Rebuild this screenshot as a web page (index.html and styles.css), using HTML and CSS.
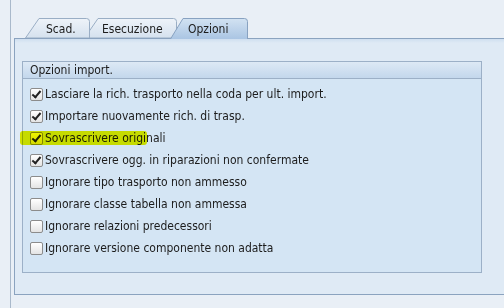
FILE: index.html
```html
<!DOCTYPE html>
<html>
<head>
<meta charset="utf-8">
<link rel="stylesheet" href="styles.css">
</head>
<body>
<div class="frame">
  <div class="tabstrip">
    <div class="tab tab1">
      <svg class="tabshape" width="65" height="20" viewBox="0 0 65 20"><defs><linearGradient id="g1" x1="0" y1="0" x2="0" y2="1"><stop offset="0" stop-color="#eef3f9"/><stop offset="1" stop-color="#d5e1ee"/></linearGradient></defs><path d="M0.5,20 L14,0.5 L61.5,0.5 Q64.5,0.5 64.5,3.5 L64.5,20 Z" fill="url(#g1)" stroke="#9aaec5"/></svg>
      <span class="tablabel">Scad.</span>
    </div>
    <div class="tab tab2">
      <svg class="tabshape" width="93" height="20" viewBox="0 0 93 20"><defs><linearGradient id="g2" x1="0" y1="0" x2="0" y2="1"><stop offset="0" stop-color="#eef3f9"/><stop offset="1" stop-color="#d5e1ee"/></linearGradient></defs><path d="M0.5,20 L14,0.5 L89.5,0.5 Q92.5,0.5 92.5,3.5 L92.5,20 Z" fill="url(#g2)" stroke="#9aaec5"/></svg>
      <span class="tablabel">Esecuzione</span>
    </div>
    <div class="tab tab3 active">
      <svg class="tabshape" width="78" height="21" viewBox="0 0 78 21"><defs><linearGradient id="g3" x1="0" y1="0" x2="0" y2="1"><stop offset="0" stop-color="#d2e2f2"/><stop offset="1" stop-color="#aac5e3"/></linearGradient></defs><path d="M0.5,21 L13,0.5 L74.5,0.5 Q77.5,0.5 77.5,3.5 L77.5,21" fill="url(#g3)" stroke="#88a2c1"/></svg>
      <span class="tablabel">Opzioni</span>
    </div>
  </div>
  <div class="panel">
    <div class="group">
      <div class="group-head">Opzioni import.</div>
      <div class="rows">
        <div class="row"><span class="cb on"></span><span class="lbl">Lasciare la rich. trasporto nella coda per ult. import.</span></div>
        <div class="row"><span class="cb on"></span><span class="lbl">Importare nuovamente rich. di trasp.</span></div>
        <div class="row marked"><span class="mark"></span><span class="cb on"></span><span class="lbl">Sovrascrivere originali</span></div>
        <div class="row"><span class="cb on"></span><span class="lbl">Sovrascrivere ogg. in riparazioni non confermate</span></div>
        <div class="row"><span class="cb"></span><span class="lbl">Ignorare tipo trasporto non ammesso</span></div>
        <div class="row"><span class="cb"></span><span class="lbl">Ignorare classe tabella non ammessa</span></div>
        <div class="row"><span class="cb"></span><span class="lbl">Ignorare relazioni predecessori</span></div>
        <div class="row"><span class="cb"></span><span class="lbl">Ignorare versione componente non adatta</span></div>
      </div>
    </div>
  </div>
</div>
</body>
</html>
```
FILE: styles.css
```css
html, body {
  margin: 0;
  padding: 0;
}
body {
  width: 504px;
  height: 308px;
  overflow: hidden;
  background: #e9eff6;
  font-family: "DejaVu Sans Condensed", "Liberation Sans", sans-serif;
  font-size: 12px;
  color: #1c1c1c;
}
.frame {
  margin-left: 10px;
  border-left: 1px solid #a9b9cb;
  height: 308px;
  padding-left: 3px;
  box-sizing: border-box;
}
.tabstrip {
  display: flex;
  padding-top: 18px;
  padding-left: 11px;
  height: 20px;
}
.tab {
  position: relative;
  height: 20px;
  display: flex;
  align-items: center;
  box-sizing: border-box;
}
.tabshape {
  position: absolute;
  left: 0;
  top: 0;
}
.tablabel {
  position: relative;
  padding-top: 1px;
}
.tab1 { width: 65px; padding-left: 21px; z-index: 3; }
.tab2 { width: 93px; margin-left: -6px; padding-left: 18px; z-index: 2; }
.tab3 { width: 78px; margin-left: -7px; padding-left: 18px; z-index: 4; height: 21px; }
.panel {
  border: 1px solid #8ba3bf;
  border-right: none;
  height: 257px;
  background: linear-gradient(#cfdff0 0, #dfeaf5 4px, #dfeaf5 100%);
  padding: 22px 0 0 7px;
  box-sizing: border-box;
}
.group {
  width: 460px;
  box-sizing: border-box;
  border: 1px solid #9cb0c7;
  background: #d4e5f4;
  height: 212px;
}
.group-head {
  height: 16px;
  border-bottom: 1px solid #9cb0c7;
  background: linear-gradient(#dde9f5, #c3d7ec);
  padding-left: 7px;
  line-height: 16px;
}
.rows {
  padding: 4px 0 0 7px;
}
.row {
  position: relative;
  height: 22px;
  display: flex;
  align-items: center;
}
.cb {
  position: relative;
  width: 11px;
  height: 11px;
  border: 1px solid #8c8c8c;
  border-radius: 2px;
  background: linear-gradient(#ffffff, #e4e4e4);
  margin-right: 2px;
  flex: none;
}
.cb.on::after {
  content: "";
  position: absolute;
  left: 3px;
  top: 0px;
  width: 3px;
  height: 7px;
  border-right: 2px solid #222;
  border-bottom: 2px solid #222;
  transform: rotate(40deg);
}
.lbl {
  white-space: nowrap;
}
.mark {
  position: absolute;
  left: -10px;
  top: 4px;
  width: 127px;
  height: 14px;
  background: #eef400;
  mix-blend-mode: multiply;
  border-radius: 3px;
  filter: blur(0.6px);
  z-index: 2;
}
```
